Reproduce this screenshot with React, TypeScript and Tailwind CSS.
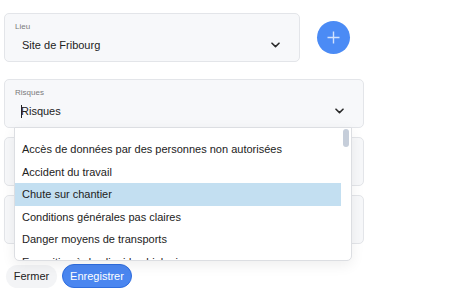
import React from "react";

const Chevron = () => (
  <svg width="9" height="6" viewBox="0 0 9 6" fill="none" className="shrink-0">
    <path d="M1 1.2 L4.5 4.6 L8 1.2" stroke="#2b2b2b" strokeWidth="1.6" strokeLinecap="round" strokeLinejoin="round" />
  </svg>
);

const items = [
  "Accès de données par des personnes non autorisées",
  "Accident du travail",
  "Chute sur chantier",
  "Conditions générales pas claires",
  "Danger moyens de transports",
  "Exposition à des liquides biologiques",
];

export default function App() {
  return (
    <div className="w-[454px] h-[304px] bg-white overflow-hidden font-['Liberation_Sans',Arial,sans-serif] text-[#222]">
      <div className="pt-[13px] pl-[4px]">
        {/* Lieu row */}
        <div className="flex items-center">
          <div className="w-[296px] h-[49px] rounded-[5px] border border-[#e3e5e9] bg-[#f7f8fa] pt-[8px] pl-[10px] pr-[19px]">
            <div className="text-[8px] leading-[10px] text-[#7a7a7a]">Lieu</div>
            <div className="mt-[6px] flex items-center justify-between pl-[7px] h-[14px]">
              <span className="text-[11px] leading-[14px] text-[#222]">Site de Fribourg</span>
              <Chevron />
            </div>
          </div>
          <button className="ml-[17px] w-[33px] h-[33px] rounded-full bg-[#4b8bf5] flex items-center justify-center mt-[-16px] translate-y-[8px]">
            <svg width="13" height="13" viewBox="0 0 13 13">
              <path d="M6.5 0.5 V12.5 M0.5 6.5 H12.5" stroke="rgba(255,255,255,0.75)" strokeWidth="1.4" />
            </svg>
          </button>
        </div>

        {/* Risques */}
        <div className="relative mt-[17px] w-[360px]">
          <div className="h-[49px] rounded-[5px] border border-[#e3e5e9] bg-[#f7f8fa] pt-[8px] pl-[10px] pr-[19px]">
            <div className="text-[8px] leading-[10px] text-[#7a7a7a]">Risques</div>
            <div className="mt-[6px] flex items-center justify-between pl-[6px] h-[14px]">
              <span className="flex items-center text-[11px] leading-[14px] text-[#222]">
                <span className="inline-block w-px h-[13px] bg-[#222] mr-[-1px]" />
                Risques
              </span>
              <Chevron />
            </div>
          </div>

          {/* dropdown */}
          <div className="absolute left-[10px] top-[48px] w-[338px] h-[134px] bg-white border border-[#dcdee2] rounded-b-[5px] shadow-[0_4px_14px_rgba(0,0,0,0.07)] overflow-hidden z-10 flex">
            <div className="flex-1 pt-[10px]">
              {items.map((it) => (
                <div
                  key={it}
                  className={`h-[22.5px] flex items-center pl-[7px] text-[11px] whitespace-nowrap text-[#222] ${
                    it === "Chute sur chantier" ? "bg-[#c3dff1]" : ""
                  }`}
                >
                  {it}
                </div>
              ))}
            </div>
            <div className="w-[10px] pt-[1px] pl-[2px]">
              <div className="w-[6px] h-[18px] rounded-full bg-[#c6ceda]" />
            </div>
          </div>
        </div>

        {/* Field 3 */}
        <div className="mt-[9px] w-[360px] h-[49px] rounded-[5px] border border-[#e3e5e9] bg-[#f7f8fa]" />
        {/* Field 4 */}
        <div className="mt-[9px] w-[360px] h-[49px] rounded-[5px] border border-[#e3e5e9] bg-[#f7f8fa]" />

        {/* Buttons */}
        <div className="mt-[20px] ml-[2px] flex items-center gap-[5px]">
          <button className="w-[51px] h-[23px] rounded-full bg-[#f3f4f6] text-[11px] text-[#222] flex items-center justify-center">
            Fermer
          </button>
          <button className="w-[70px] h-[24px] rounded-full bg-[#4a86f0] border border-[#2f6ddf] text-[11px] text-white font-medium flex items-center justify-center">
            Enregistrer
          </button>
        </div>
      </div>
    </div>
  );
}
